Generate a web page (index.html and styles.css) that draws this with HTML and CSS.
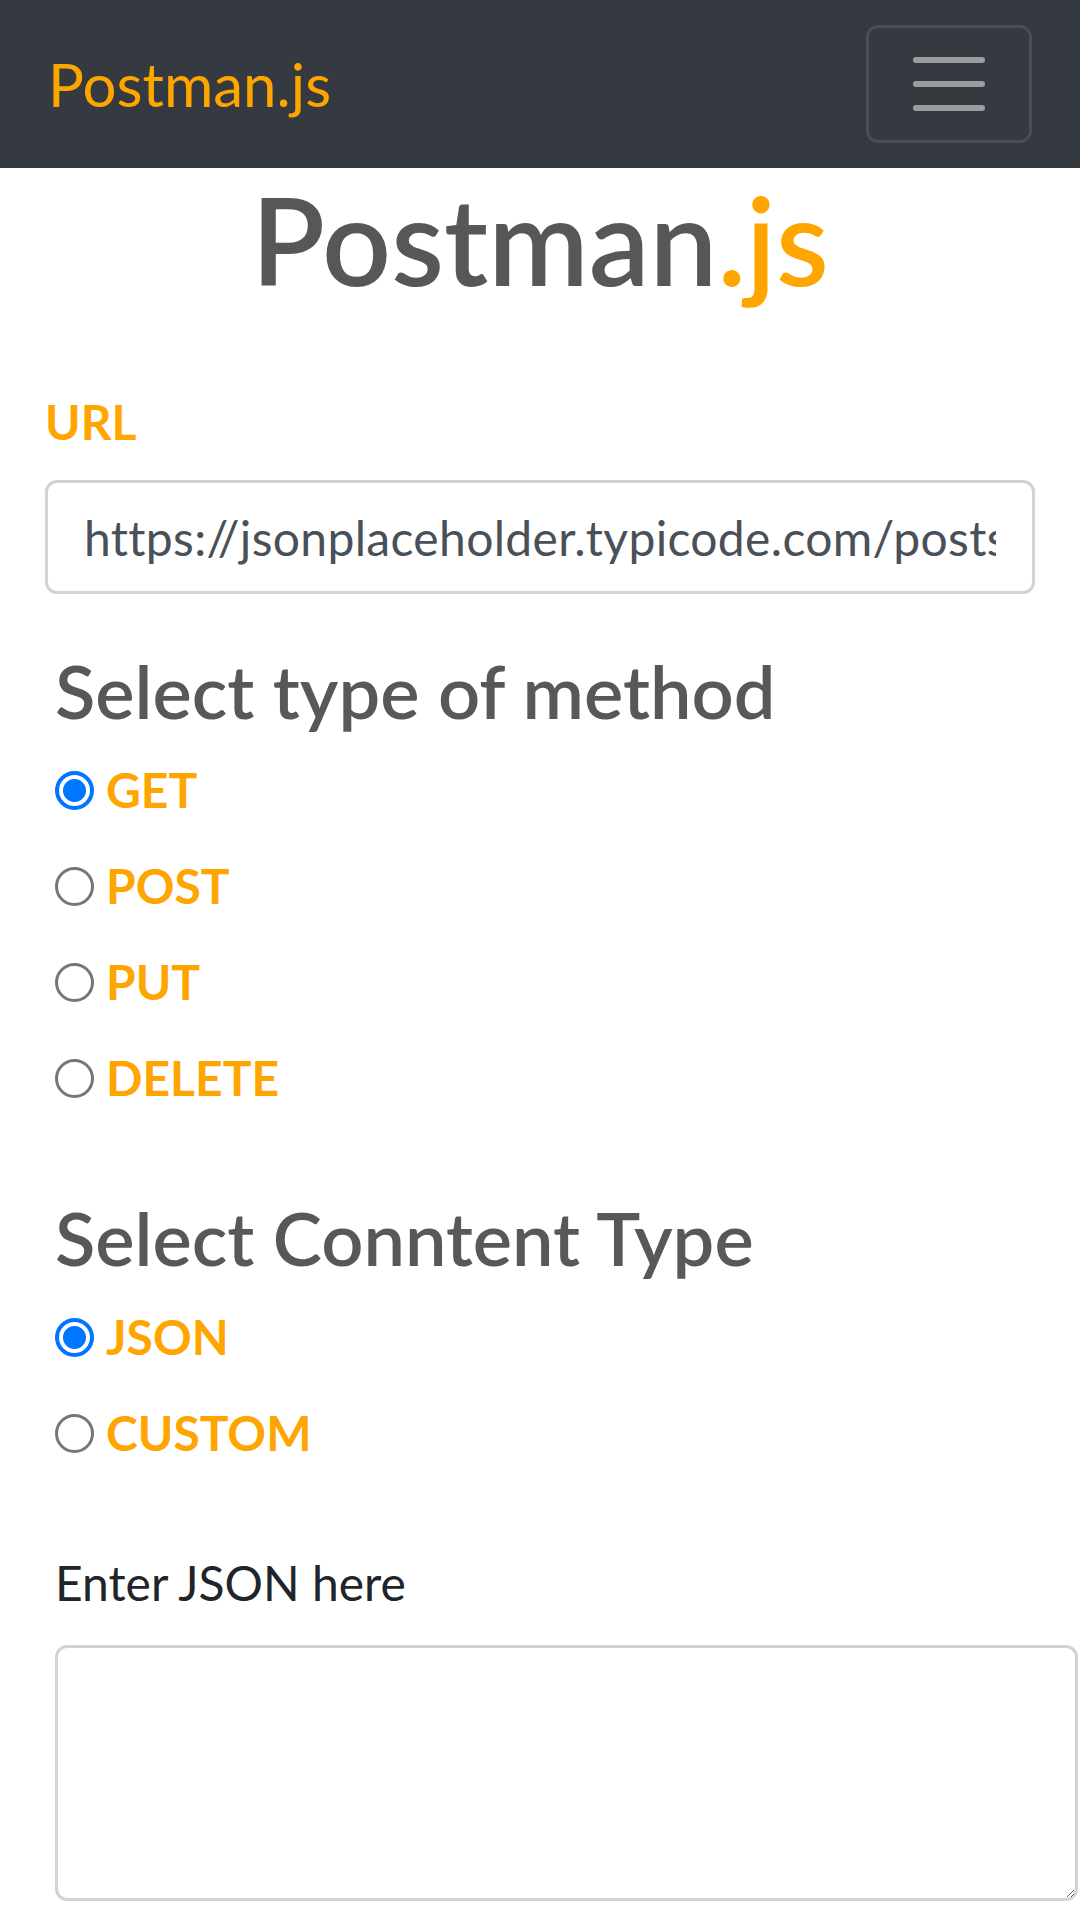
FILE: index.html
```html
<!DOCTYPE html>
<html lang="en">
<head>
<meta charset="utf-8">
<title>Postman.js</title>
<link rel="stylesheet" href="styles.css">
</head>
<body>
<nav class="navbar">
  <a class="brand" href="#">Postman.js</a>
  <button class="toggler" type="button" aria-label="Toggle navigation">
    <svg class="toggler-icon" viewBox="0 0 30 30" width="90" height="90"><path d="M4 7h22M4 15h22M4 23h22" stroke="rgba(255,255,255,0.5)" stroke-width="2" stroke-linecap="round" fill="none"/></svg>
  </button>
</nav>
<main class="container">
  <h1 class="title">Postman<span class="accent">.js</span></h1>
  <label class="url-label" for="url">URL</label>
  <input class="url-input" id="url" type="text" value="https://jsonplaceholder.typicode.com/posts">
  <section class="group">
    <h4 class="group-title first">Select type of method</h4>
    <div class="opt"><input class="radio" type="radio" name="method" id="m-get" checked><label class="opt-label" for="m-get">GET</label></div>
    <div class="opt"><input class="radio" type="radio" name="method" id="m-post"><label class="opt-label" for="m-post">POST</label></div>
    <div class="opt"><input class="radio" type="radio" name="method" id="m-put"><label class="opt-label" for="m-put">PUT</label></div>
    <div class="opt"><input class="radio" type="radio" name="method" id="m-delete"><label class="opt-label" for="m-delete">DELETE</label></div>
    <h4 class="group-title second">Select Conntent Type</h4>
    <div class="opt"><input class="radio" type="radio" name="ctype" id="c-json" checked><label class="opt-label" for="c-json">JSON</label></div>
    <div class="opt"><input class="radio" type="radio" name="ctype" id="c-custom"><label class="opt-label" for="c-custom">CUSTOM</label></div>
    <label class="json-label" for="json">Enter JSON here</label>
    <textarea class="json-input" id="json"></textarea>
  </section>
</main>
</body>
</html>
```
FILE: styles.css
```css
* { box-sizing: border-box; }
html, body { margin: 0; padding: 0; background: #fff; }
body { font-family: Lato, "Open Sans", sans-serif; color: #212529; }

.navbar {
  height: 168px;
  background: #343a40;
  padding: 0 48px;
  display: flex;
  align-items: center;
  justify-content: space-between;
}
.brand {
  font-size: 60px;
  line-height: 90px;
  color: #ffa500;
  text-decoration: none;
  font-weight: 400;
}
.toggler {
  width: 166px;
  height: 118px;
  padding: 0;
  background: transparent;
  border: 3px solid rgba(255,255,255,0.1);
  border-radius: 12px;
  display: flex;
  align-items: center;
  justify-content: center;
}
.toggler-icon { display: block; }

.container { padding: 0 45px; }

.title {
  margin: 0;
  font-size: 121px;
  line-height: 144px;
  font-weight: 600;
  color: #575757;
  text-align: center;
}
.accent { color: #ffa500; }

.url-label {
  display: block;
  margin: 74px 0 22px;
  font-size: 48px;
  line-height: 72px;
  font-weight: 700;
  color: #ffa500;
}
.url-input {
  display: block;
  width: 100%;
  height: 114px;
  padding: 0 36px;
  border: 3px solid #ced4da;
  border-radius: 12px;
  font-family: Lato, "Open Sans", sans-serif;
  font-size: 48px;
  letter-spacing: 0.33px;
  color: #495057;
  background: #fff;
  outline: none;
}

.group { padding-left: 10px; }
.group-title {
  margin: 0 0 7px;
  font-size: 74px;
  line-height: 88px;
  font-weight: 600;
  color: #585858;
}
.group-title.first { margin-top: 53px; }
.group-title.second { margin-top: 68px; }

.opt {
  height: 96px;
  display: flex;
  align-items: center;
  gap: 12px;
}
.radio {
  -webkit-appearance: none;
  appearance: none;
  margin: 0;
  width: 39px;
  height: 39px;
  border-radius: 50%;
  border: 3px solid #767676;
  background: #fff;
  flex: none;
}
.radio:checked {
  border: 4px solid #0075ff;
  background: radial-gradient(circle, #0075ff 0 11px, #fff 12px);
}
.opt-label {
  font-size: 48px;
  line-height: 72px;
  font-weight: 700;
  color: #ffa500;
}

.json-label {
  display: block;
  margin: 66px 0 26px;
  font-size: 48px;
  line-height: 72px;
  color: #212529;
}
.json-input {
  display: block;
  width: 1023px;
  height: 256px;
  border: 3px solid #ced4da;
  border-radius: 12px;
  resize: vertical;
  font-family: Lato, "Open Sans", sans-serif;
  font-size: 48px;
  outline: none;
}
```
